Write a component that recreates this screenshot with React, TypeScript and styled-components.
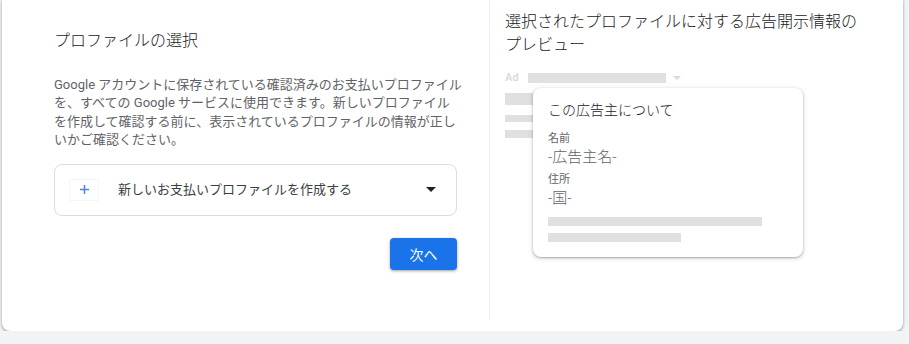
import React from 'react';
import styled, { createGlobalStyle } from 'styled-components';

const GlobalStyle = createGlobalStyle`
  body {
    margin: 0;
    background: #f1f3f4;
    font-family: Roboto, 'Noto Sans CJK JP', sans-serif;
  }
`;

const Page = styled.div`
  padding: 0 6px 0 2px;
`;

const Card = styled.div`
  height: 331px;
  background: #fff;
  border-radius: 0 0 8px 8px;
  box-shadow: 0 1px 2px rgba(60, 64, 67, 0.4),
    0 1px 3px 1px rgba(60, 64, 67, 0.15);
  display: grid;
  grid-template-columns: 487px 1fr;
`;

const LeftPane = styled.section`
  padding: 29px 32px 0 52px;
  display: flex;
  flex-direction: column;
`;

const Title = styled.h2`
  margin: 0;
  font-size: 16px;
  line-height: 24px;
  font-weight: 300;
  color: #202124;
`;

const Description = styled.p`
  margin: 23px 0 0;
  font-size: 13px;
  line-height: 18.4px;
  color: #5f6368;
  white-space: nowrap;
`;

const Select = styled.div`
  margin-top: 14px;
  height: 50px;
  border: 1px solid #dadce0;
  border-radius: 8px;
  display: flex;
  align-items: center;
  padding: 0 20px 0 14px;
`;

const IconBox = styled.span`
  width: 28px;
  height: 20px;
  border: 1px solid #f4f5f6;
  border-radius: 2px;
  display: flex;
  align-items: center;
  justify-content: center;
  margin-right: 19px;
`;

const SelectText = styled.span`
  flex: 1;
  font-size: 13px;
  line-height: 20px;
  color: #3c4043;
`;

const Actions = styled.div`
  margin-top: 22px;
  display: flex;
  justify-content: flex-end;
`;

const NextButton = styled.button`
  width: 67px;
  height: 32px;
  border: none;
  border-radius: 4px;
  background: #1a73e8;
  color: #fff;
  font-family: inherit;
  font-size: 14px;
  font-weight: 400;
  box-shadow: 0 1px 2px rgba(60, 64, 67, 0.3),
    0 1px 3px 1px rgba(60, 64, 67, 0.15);
`;

const RightPane = styled.section`
  border-left: 1px solid #eeeff1;
  margin-bottom: 11px;
  padding: 10px 0 0 15px;
`;

const PreviewTitle = styled.h2`
  margin: 0;
  font-size: 16px;
  line-height: 23px;
  font-weight: 300;
  color: #202124;
`;

const Preview = styled.div`
  position: relative;
  margin-top: 16px;
`;

const AdRow = styled.div`
  display: flex;
  align-items: center;
  height: 12px;
`;

const AdLabel = styled.span`
  font-size: 11px;
  font-weight: 700;
  line-height: 12px;
  color: #dadce0;
  margin-right: 9px;
`;

const AdCaret = styled.span`
  display: flex;
  margin-left: 7px;
`;

const Bar = styled.div<{ $w: number; $h: number; $mt: number }>`
  width: ${(p) => p.$w}px;
  height: ${(p) => p.$h}px;
  margin-top: ${(p) => p.$mt}px;
  background: #e0e0e0;
`;

const Popup = styled.div`
  position: absolute;
  left: 28px;
  top: 16px;
  width: 270px;
  box-sizing: border-box;
  padding: 12px 15px 15px;
  background: #fff;
  border-radius: 8px;
  box-shadow: 0 1px 2px rgba(60, 64, 67, 0.35),
    0 1px 4px 1px rgba(60, 64, 67, 0.15);
`;

const PopupTitle = styled.div`
  font-size: 14px;
  line-height: 20px;
  font-weight: 300;
  color: #202124;
`;

const FieldLabel = styled.div<{ $mt: number }>`
  margin-top: ${(p) => p.$mt}px;
  font-size: 11px;
  line-height: 16px;
  color: #5f6368;
`;

const FieldValue = styled.div`
  font-size: 15px;
  line-height: 20px;
  font-weight: 300;
  color: #5f6368;
`;

function Plus() {
  return (
    <svg width="9" height="9" viewBox="0 0 9 9">
      <path d="M3.75 0h1.5v3.75H9v1.5H5.25V9h-1.5V5.25H0v-1.5h3.75z" fill="#4285f4" />
    </svg>
  );
}

function Caret({ color, w }: { color: string; w: number }) {
  return (
    <svg width={w} height={w / 2} viewBox="0 0 10 5">
      <path d="M0 0h10L5 5z" fill={color} />
    </svg>
  );
}

export default function App() {
  return (
    <Page>
      <GlobalStyle />
      <Card>
        <LeftPane>
          <Title>プロファイルの選択</Title>
          <Description>
            Google アカウントに保存されている確認済みのお支払いプロファイル
            <br />
            を、すべての Google サービスに使用できます。新しいプロファイル
            <br />
            を作成して確認する前に、表示されているプロファイルの情報が正し
            <br />
            いかご確認ください。
          </Description>
          <Select>
            <IconBox>
              <Plus />
            </IconBox>
            <SelectText>新しいお支払いプロファイルを作成する</SelectText>
            <Caret color="#202124" w={10} />
          </Select>
          <Actions>
            <NextButton>次へ</NextButton>
          </Actions>
        </LeftPane>
        <RightPane>
          <PreviewTitle>
            選択されたプロファイルに対する広告開示情報の
            <br />
            プレビュー
          </PreviewTitle>
          <Preview>
            <AdRow>
              <AdLabel>Ad</AdLabel>
              <Bar $w={138} $h={10} $mt={0} />
              <AdCaret>
                <Caret color="#dadce0" w={8} />
              </AdCaret>
            </AdRow>
            <Bar $w={160} $h={12} $mt={9} />
            <Bar $w={160} $h={7} $mt={10} />
            <Bar $w={160} $h={8} $mt={8} />
            <Popup>
              <PopupTitle>この広告主について</PopupTitle>
              <FieldLabel $mt={11}>名前</FieldLabel>
              <FieldValue>-広告主名-</FieldValue>
              <FieldLabel $mt={5}>住所</FieldLabel>
              <FieldValue>-国-</FieldValue>
              <Bar $w={214} $h={9} $mt={9} />
              <Bar $w={133} $h={9} $mt={7} />
            </Popup>
          </Preview>
        </RightPane>
      </Card>
    </Page>
  );
}
